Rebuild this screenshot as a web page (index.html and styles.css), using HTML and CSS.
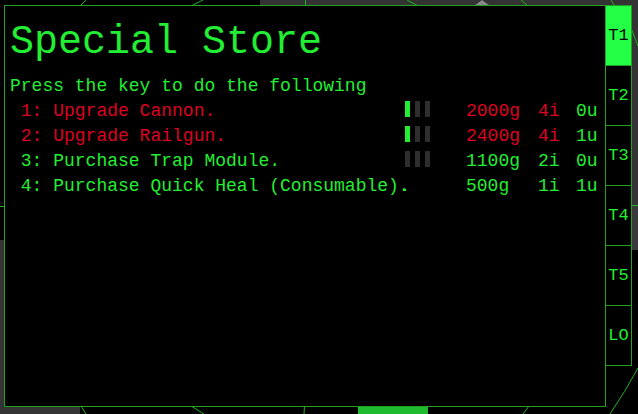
FILE: index.html
```html
<!DOCTYPE html>
<html>
<head>
<meta charset="utf-8">
<link rel="stylesheet" href="styles.css">
</head>
<body>
<div class="scene">
  <svg class="scene-art" width="638" height="414" viewBox="0 0 638 414">
    <rect x="260" y="0" width="378" height="250" fill="#333"/>
    <rect x="632" y="205" width="6" height="45" fill="#3a3a3a"/>
    <rect x="0" y="240" width="80" height="174" fill="#333"/>
    <polygon points="474,6 482,0 490,6" fill="#888"/>
    <g stroke="#22b022" stroke-width="1" fill="none">
      <line x1="305.5" y1="0" x2="305.5" y2="6"/>
      <line x1="86" y1="0" x2="80" y2="6"/>
      <line x1="203" y1="0" x2="191" y2="6"/>
      <line x1="407" y1="0" x2="418" y2="6"/>
      <line x1="521" y1="0" x2="528" y2="6"/>
      <line x1="611" y1="0" x2="615" y2="6"/>
      <line x1="631" y1="28" x2="638" y2="46"/>
      <line x1="0" y1="206.5" x2="4" y2="206.5"/>
      <line x1="632" y1="205.5" x2="638" y2="205.5"/>
      <line x1="81" y1="406" x2="86" y2="414"/>
      <line x1="191" y1="406" x2="204" y2="414"/>
      <line x1="304.5" y1="406" x2="304" y2="414"/>
      <line x1="529" y1="406" x2="523" y2="414"/>
      <path d="M638 368 Q625 392 610 414"/>
    </g>
    <rect x="358" y="406" width="70" height="8" fill="#1fbb2f"/>
  </svg>
  <div class="overlay">
    <div class="panel">
      <h1 class="title">Special Store</h1>
      <p class="intro">Press the key to do the following</p>
      <div class="rows">
        <div class="row locked">
          <span class="name"> 1: Upgrade Cannon.</span>
          <span class="bars"><i class="bar on"></i><i class="bar"></i><i class="bar"></i></span>
          <span class="price">2000g</span>
          <span class="items">4i</span>
          <span class="units ok">0u</span>
        </div>
        <div class="row locked">
          <span class="name"> 2: Upgrade Railgun.</span>
          <span class="bars"><i class="bar on"></i><i class="bar"></i><i class="bar"></i></span>
          <span class="price">2400g</span>
          <span class="items">4i</span>
          <span class="units ok">1u</span>
        </div>
        <div class="row">
          <span class="name"> 3: Purchase Trap Module.</span>
          <span class="bars"><i class="bar"></i><i class="bar"></i><i class="bar"></i></span>
          <span class="price">1100g</span>
          <span class="items">2i</span>
          <span class="units">0u</span>
        </div>
        <div class="row">
          <span class="name"> 4: Purchase Quick Heal (Consumable).</span>
          <span class="bars"><i class="dot"></i></span>
          <span class="price">500g</span>
          <span class="items">1i</span>
          <span class="units">1u</span>
        </div>
      </div>
    </div>
    <div class="tabs">
      <div class="tab active">T1</div>
      <div class="tab">T2</div>
      <div class="tab">T3</div>
      <div class="tab">T4</div>
      <div class="tab">T5</div>
      <div class="tab">LO</div>
    </div>
  </div>
</div>
</body>
</html>
```

FILE: styles.css
```css
html, body {
  margin: 0;
  padding: 0;
  background: #000;
}
body {
  width: 638px;
  height: 414px;
  overflow: hidden;
  font-family: "Courier New", "Nimbus Mono PS", "FreeMono", "Liberation Mono", monospace;
  color: #22ee33;
}
.scene {
  position: relative;
  width: 638px;
  height: 414px;
  background: #000;
}
.scene-art {
  position: absolute;
  left: 0;
  top: 0;
  display: block;
}
.overlay {
  position: absolute;
  left: 4px;
  top: 5px;
  display: flex;
  align-items: flex-start;
}
.panel {
  box-sizing: border-box;
  width: 602px;
  height: 402px;
  border: 1px solid #22a022;
  background: #000;
  padding: 14px 0 0 5px;
}
.title {
  margin: 0 0 9px 0;
  font-weight: normal;
  font-size: 40px;
  line-height: 45px;
  color: #22ee33;
  white-space: pre;
}
.intro {
  margin: 0;
  font-size: 18px;
  line-height: 25px;
  white-space: pre;
}
.rows {
  display: flex;
  flex-direction: column;
}
.row {
  display: grid;
  grid-template-columns: 395px 61px 72px 38px 30px;
  font-size: 18px;
  line-height: 25px;
  color: #22ee33;
  white-space: pre;
}
.row.locked {
  color: #dd0022;
}
.row .units.ok {
  color: #22ee33;
}
.bars {
  display: flex;
  gap: 5px;
  padding-top: 2px;
  height: 16px;
}
.bar {
  display: block;
  width: 5px;
  height: 16px;
  background: #2e2e2e;
}
.bar.on {
  background: #22ee33;
}
.dot {
  display: block;
  width: 3px;
  height: 2px;
  margin: 13px 0 0 -2px;
  background: #22ee33;
}
.tabs {
  display: flex;
  flex-direction: column;
  margin-left: -1px;
}
.tab {
  box-sizing: border-box;
  width: 27px;
  height: 61px;
  margin-bottom: -1px;
  border: 1px solid #22a022;
  background: #000;
  color: #22ee33;
  font-size: 17px;
  display: flex;
  align-items: center;
  justify-content: center;
}
.tab.active {
  background: #22ff44;
  color: #000;
}
```
